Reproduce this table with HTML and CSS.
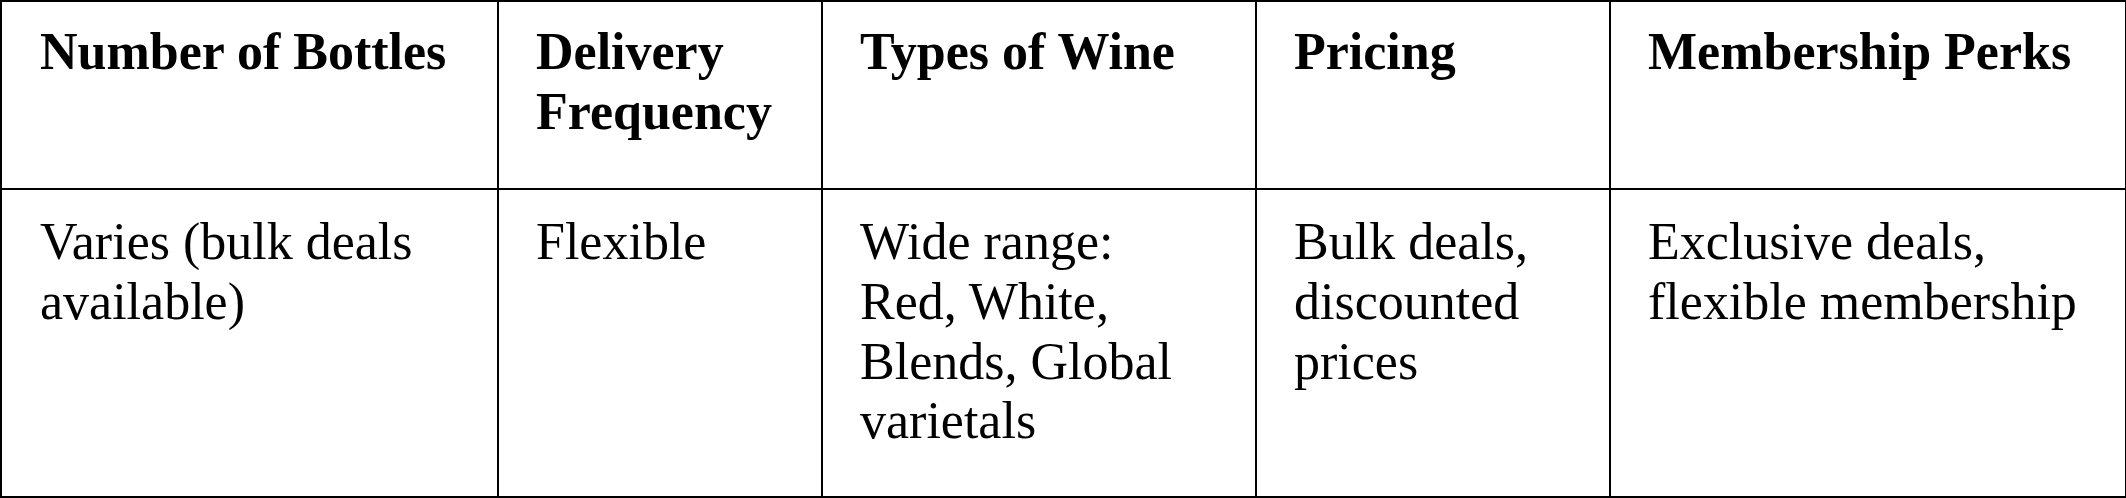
FILE: index.html
```html
<!DOCTYPE html>
<html>
<head>
<meta charset="utf-8">
<link rel="stylesheet" href="styles.css">
</head>
<body>
<table class="grid">
  <colgroup>
    <col class="c1"><col class="c2"><col class="c3"><col class="c4"><col class="c5">
  </colgroup>
  <thead>
    <tr>
      <th>Number of Bottles</th>
      <th>Delivery Frequency</th>
      <th>Types of Wine</th>
      <th>Pricing</th>
      <th>Membership Perks</th>
    </tr>
  </thead>
  <tbody>
    <tr>
      <td>Varies (bulk deals available)</td>
      <td>Flexible</td>
      <td>Wide range: Red, White, Blends, Global varietals</td>
      <td>Bulk deals, discounted prices</td>
      <td>Exclusive deals, flexible membership</td>
    </tr>
  </tbody>
</table>
</body>
</html>
```
FILE: styles.css
```css
html, body {
  margin: 0;
  padding: 0;
  background: #ffffff;
}
.grid {
  width: 2125px;
  border-collapse: collapse;
  table-layout: fixed;
  font-family: "Liberation Serif", "Times New Roman", serif;
  font-size: 52px;
  line-height: 1.15;
  color: #000;
}
.c1 { width: 497px; }
.c2 { width: 324px; }
.c3 { width: 434px; }
.c4 { width: 354px; }
.c5 { width: 516px; }
.grid th, .grid td {
  border: 2px solid #000;
  text-align: left;
  vertical-align: top;
  padding: 20px 34px 0 37px;
}
.grid th:first-child, .grid td:first-child {
  padding-left: 38px;
}
.grid th {
  font-weight: bold;
  height: 166px;
}
.grid td {
  font-weight: normal;
  height: 284px;
  padding-top: 22px;
}
```
